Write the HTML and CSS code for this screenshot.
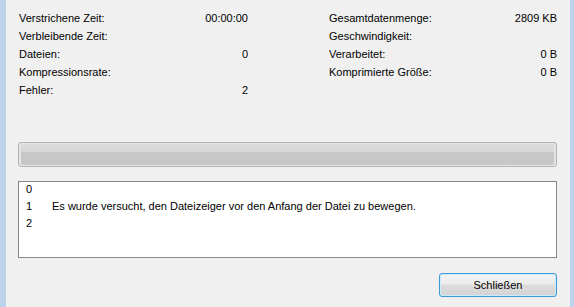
FILE: index.html
```html
<!DOCTYPE html>
<html lang="de">
<head>
    <meta charset="UTF-8">
    <title>Fortschritt</title>
    <link rel="stylesheet" href="styles.css">
</head>
<body>
    <div class="window">
        <div class="stats">
            <div class="col">
                <div class="row"><span>Verstrichene Zeit:</span><span>00:00:00</span></div>
                <div class="row"><span>Verbleibende Zeit:</span><span></span></div>
                <div class="row"><span>Dateien:</span><span>0</span></div>
                <div class="row"><span>Kompressionsrate:</span><span></span></div>
                <div class="row"><span>Fehler:</span><span>2</span></div>
            </div>
            <div class="col">
                <div class="row"><span>Gesamtdatenmenge:</span><span>2809 KB</span></div>
                <div class="row"><span>Geschwindigkeit:</span><span></span></div>
                <div class="row"><span>Verarbeitet:</span><span>0 B</span></div>
                <div class="row"><span>Komprimierte Größe:</span><span>0 B</span></div>
            </div>
        </div>
        <div class="progress"><div class="progress-inner"></div></div>
        <div class="log">
            <div class="log-row"><span class="num">0</span><span></span></div>
            <div class="log-row"><span class="num">1</span><span>Es wurde versucht, den Dateizeiger vor den Anfang der Datei zu bewegen.</span></div>
            <div class="log-row"><span class="num">2</span><span></span></div>
        </div>
        <div class="actions">
            <button class="btn">Schließen</button>
        </div>
    </div>
</body>
</html>
```
FILE: styles.css
```css
html, body {
    margin: 0;
    padding: 0;
}
body {
    font-family: 'Liberation Sans', Arial, sans-serif;
    font-size: 11px;
    color: #000;
    background: #f0f0f0;
}
.window {
    box-sizing: border-box;
    height: 307px;
    border-left: 6px solid #bcd3eb;
    border-right: 4px solid #bcd3eb;
    padding: 9px 13px 0 12px;
    background: #f0f0f0;
}
.stats {
    display: grid;
    grid-template-columns: 230px 229px;
    column-gap: 80px;
}
.row {
    display: flex;
    justify-content: space-between;
    height: 18px;
    line-height: 18px;
    padding-left: 1px;
}
.progress {
    margin-top: 43px;
    height: 25px;
    box-sizing: border-box;
    border: 1px solid #b2b2b2;
    border-radius: 3px;
    background: #e6e6e6;
    padding: 1px;
}
.progress-inner {
    height: 100%;
    border-radius: 2px;
    background: linear-gradient(#dcdcdc 0, #d8d8d8 35%, #c6c6c6 42%, #c8c8c8 100%);
    box-shadow: inset 1px 0 0 #e4e4e4, inset -1px 0 0 #e4e4e4;
}
.log {
    margin-top: 14px;
    height: 77px;
    box-sizing: border-box;
    border: 1px solid #828790;
    background: #fff;
}
.log-row {
    display: flex;
    height: 17px;
    line-height: 15px;
}
.num {
    width: 33px;
    padding-left: 7px;
    box-sizing: border-box;
}
.actions {
    display: flex;
    justify-content: flex-end;
    margin-top: 15px;
}
.btn {
    width: 118px;
    height: 24px;
    font-family: 'Liberation Sans', Arial, sans-serif;
    font-size: 11px;
    color: #000;
    border: 1px solid #3c9ad8;
    border-radius: 3px;
    background: linear-gradient(#f3f3f3 0, #ececec 45%, #dddddd 50%, #d3d3d3 100%);
    box-shadow: inset 0 0 0 1px #c8ecfb;
    padding: 0;
}
```
